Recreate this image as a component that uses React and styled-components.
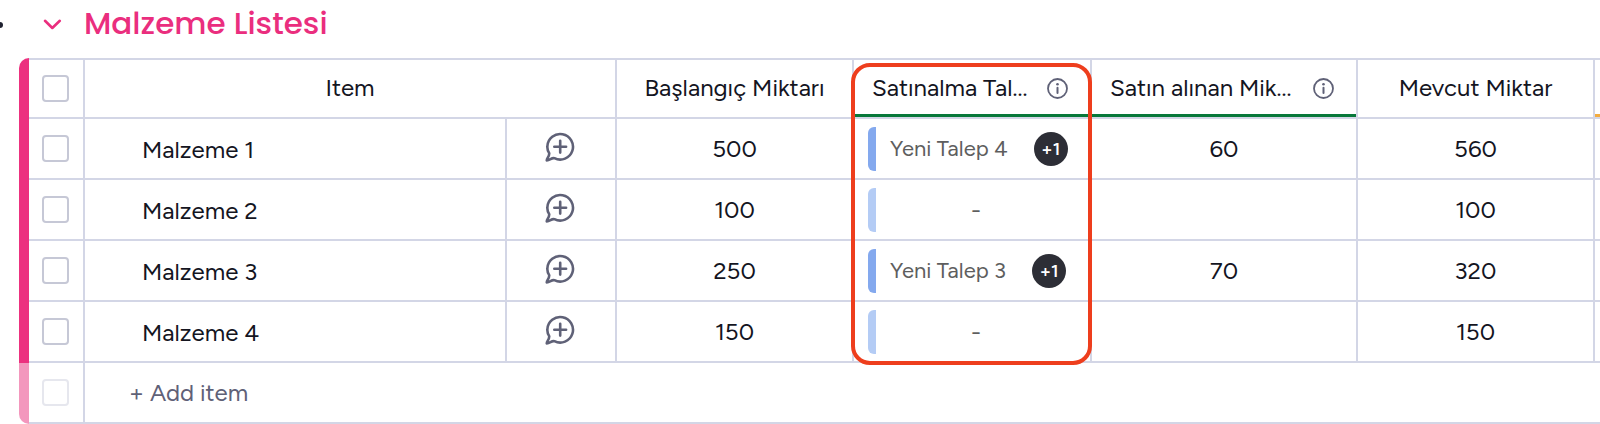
import React from "react";
import styled, { createGlobalStyle } from "styled-components";

const GlobalStyle = createGlobalStyle`
  * {
    box-sizing: border-box;
  }

  body {
    margin: 0;
    background-color: white;
    color: #14151f;
    font-family: Figtree, Lato, sans-serif;
    font-size: 24px;
    line-height: 32px;
  }

  button {
    padding: 0;
    border: 0;
    background: none;
    color: inherit;
    font: inherit;
    cursor: pointer;
  }
`;

const Board = styled.main`
  overflow: hidden;
`;

const GroupHeader = styled.header`
  display: flex;
  align-items: center;
  height: 46px;
  margin-bottom: 12px;
`;

const MenuDot = styled.span`
  width: 3px;
  height: 6px;
  margin-right: 37px;
  margin-top: 4px;
  border-radius: 0 3px 3px 0;
  background-color: #1f2130;
`;

const CollapseButton = styled.button`
  display: flex;
  width: 24px;
  height: 24px;
  margin-right: 20px;
  color: #ea2e7e;
`;

const GroupTitle = styled.h1`
  margin: 0;
  color: #ea2e7e;
  font-family: Poppins, Lato, sans-serif;
  font-size: 31px;
  font-weight: 500;
  line-height: 40px;
`;

const Table = styled.table`
  width: calc(100% - 19px);
  min-width: 1400px;
  margin-left: 19px;
  table-layout: fixed;
  border-collapse: separate;
  border-spacing: 0;
`;

const Col = styled.col`
  width: ${(props) => props.$width};
`;

const GroupBar = styled.td`
  padding: 0;
  background-color: ${(props) => (props.$light ? "#f397bd" : "#ec317f")};
  border-top-left-radius: ${(props) => (props.$first ? "10px" : "0")};
  border-bottom-left-radius: ${(props) => (props.$light ? "10px" : "0")};
`;

const Cell = styled.td`
  padding: 0;
  border-right: 2px solid #d3d6e6;
  border-bottom: 2px solid #d3d6e6;
  text-align: center;
  font-weight: 400;

  &:last-child {
    border-right: 0;
  }
`;

const HeadCell = styled(Cell)`
  position: relative;
  border-top: 2px solid #d3d6e6;
`;

const HeadContent = styled.div`
  display: flex;
  align-items: center;
  justify-content: ${(props) => (props.$info ? "space-between" : "center")};
  height: 57px;
  padding: ${(props) => (props.$info ? "2px 22px 0 18px" : "2px 0 0")};
  border-bottom: 3px solid ${(props) => props.$accent || "transparent"};
  white-space: nowrap;
`;

const CellContent = styled.div`
  display: flex;
  align-items: center;
  justify-content: center;
  height: 59px;
`;

const CheckContent = styled(CellContent)`
  height: 57px;
  padding-right: 2px;
`;

const UpdateContent = styled(CellContent)`
  padding-right: 2px;
`;

const NameContent = styled(CellContent)`
  justify-content: flex-start;
  padding: 2px 0 0 57px;
`;

const AddContent = styled(CellContent)`
  justify-content: flex-start;
  padding-left: 44px;
  color: #5f6177;
`;

const IconButton = styled.button`
  display: flex;
  color: #5f6177;
`;

const Checkbox = styled.input`
  appearance: none;
  width: 27px;
  height: 27px;
  margin: 0;
  border: 2px solid #c6c8d6;
  border-radius: 4px;
  background-color: white;

  &:checked {
    background-color: #ea2e7e;
  }

  &:disabled {
    border-color: #e6e7ee;
  }
`;

const RequestContent = styled(CellContent)`
  justify-content: flex-start;
  padding: 0 14px;
  color: #5e5e5e;
`;

const RequestMark = styled.span`
  width: 8px;
  height: 44px;
  border-radius: 6px 0 0 6px;
  background-color: ${(props) => (props.$empty ? "#b4ccf5" : "#84a9ee")};
`;

const RequestName = styled.span`
  margin: 0 26px 0 14px;
  font-size: 22px;
  white-space: nowrap;
`;

const RequestEmpty = styled.span`
  flex: 1;
`;

const MoreBadge = styled.button`
  width: 34px;
  height: 34px;
  border-radius: 50%;
  && {
    background-color: #2d2e36;
    color: white;
    font-size: 18px;
    font-weight: 600;
    line-height: 34px;
  }
`;

// Surrounds the request column from its header down to the last item
const ColumnHighlight = styled.div`
  position: absolute;
  z-index: 1;
  top: 3px;
  left: -3px;
  right: -2px;
  height: 302px;
  border: 4px solid #ee3e1d;
  border-radius: 19px;
  pointer-events: none;
`;

const ChevronIcon = () => (
  <svg width="24" height="24" viewBox="0 0 24 24" fill="none" stroke="currentColor" strokeWidth="2.6" strokeLinecap="round" strokeLinejoin="round">
    <path d="M5 9.8 12.3 17l7.5-7.2" />
  </svg>
);

const InfoIcon = () => (
  <svg width="21" height="21" viewBox="0 0 21 21" fill="none" stroke="currentColor">
    <circle cx="10.5" cy="10.5" r="9.5" strokeWidth="1.8" />
    <path d="M10.5 9.8v5.2" strokeWidth="2" strokeLinecap="round" />
    <circle cx="10.5" cy="6.3" r="1.3" fill="currentColor" stroke="none" />
  </svg>
);

const ChatIcon = () => (
  <svg width="30" height="34" viewBox="0 0 30 34" fill="none" stroke="currentColor" strokeWidth="2.6" strokeLinecap="round" strokeLinejoin="round">
    <path d="M4.2 21.1C2.6 18.6 2.2 16.4 2.4 14.2A12.8 12.8 0 1 1 9.4 26.2C6.6 25.4 5 28.4 1.8 28.4C1.4 26.2 4.6 25 4.2 21.1Z" />
    <path d="M15.2 8.8v11.8M9.3 14.7h11.8" />
  </svg>
);

const items = [
  { id: 1, name: "Malzeme 1", start: 500, request: "Yeni Talep 4", bought: 60, current: 560 },
  { id: 2, name: "Malzeme 2", start: 100, current: 100 },
  { id: 3, name: "Malzeme 3", start: 250, request: "Yeni Talep 3", bought: 70, current: 320 },
  { id: 4, name: "Malzeme 4", start: 150, current: 150 },
];

const columns = [
  { title: "Item", span: 2 },
  { title: "Başlangıç Miktarı" },
  { title: "Satınalma Tal...", info: true, accent: "#08783a", highlight: true },
  { title: "Satın alınan Mik...", info: true, accent: "#08783a" },
  { title: "Mevcut Miktar" },
  { title: "", accent: "#f3ac40" },
];

const widths = ["10px", "56px", "auto", "110px", "237px", "238px", "266px", "237px", "5px"];

function Request({ name }) {
  return (
    <RequestContent>
      <RequestMark $empty={!name} />
      {name ? (
        <>
          <RequestName>{name}</RequestName>
          <MoreBadge>+1</MoreBadge>
        </>
      ) : (
        <RequestEmpty>-</RequestEmpty>
      )}
    </RequestContent>
  );
}

function ItemRow({ item }) {
  return (
    <tr>
      <GroupBar />
      <Cell>
        <CheckContent>
          <Checkbox type="checkbox" aria-label={item.name} />
        </CheckContent>
      </Cell>
      <Cell>
        <NameContent>{item.name}</NameContent>
      </Cell>
      <Cell>
        <UpdateContent>
          <IconButton aria-label="Add update">
            <ChatIcon />
          </IconButton>
        </UpdateContent>
      </Cell>
      <Cell>{item.start}</Cell>
      <Cell>
        <Request name={item.request} />
      </Cell>
      <Cell>
        <CellContent>{item.bought}</CellContent>
      </Cell>
      <Cell>{item.current}</Cell>
      <Cell />
    </tr>
  );
}

export default function App() {
  return (
    <Board>
      <GlobalStyle />
      <GroupHeader>
        <MenuDot />
        <CollapseButton aria-label="Collapse group">
          <ChevronIcon />
        </CollapseButton>
        <GroupTitle>Malzeme Listesi</GroupTitle>
      </GroupHeader>
      <Table>
        <colgroup>
          {widths.map((width, index) => (
            <Col key={index} $width={width} />
          ))}
        </colgroup>
        <thead>
          <tr>
            <GroupBar $first />
            <HeadCell>
              <CheckContent>
                <Checkbox type="checkbox" aria-label="Select all" />
              </CheckContent>
            </HeadCell>
            {columns.map((column) => (
              <HeadCell as="th" key={column.title} colSpan={column.span}>
                <HeadContent $info={column.info} $accent={column.accent}>
                  {column.title}
                  {column.info && (
                    <IconButton aria-label="Column info">
                      <InfoIcon />
                    </IconButton>
                  )}
                </HeadContent>
                {column.highlight && <ColumnHighlight />}
              </HeadCell>
            ))}
          </tr>
        </thead>
        <tbody>
          {items.map((item) => (
            <ItemRow key={item.id} item={item} />
          ))}
          <tr>
            <GroupBar $light />
            <Cell>
              <CheckContent>
                <Checkbox type="checkbox" aria-label="New item" disabled />
              </CheckContent>
            </Cell>
            <Cell colSpan={7}>
              <AddContent>
                <button>+ Add item</button>
              </AddContent>
            </Cell>
          </tr>
        </tbody>
      </Table>
    </Board>
  );
}
